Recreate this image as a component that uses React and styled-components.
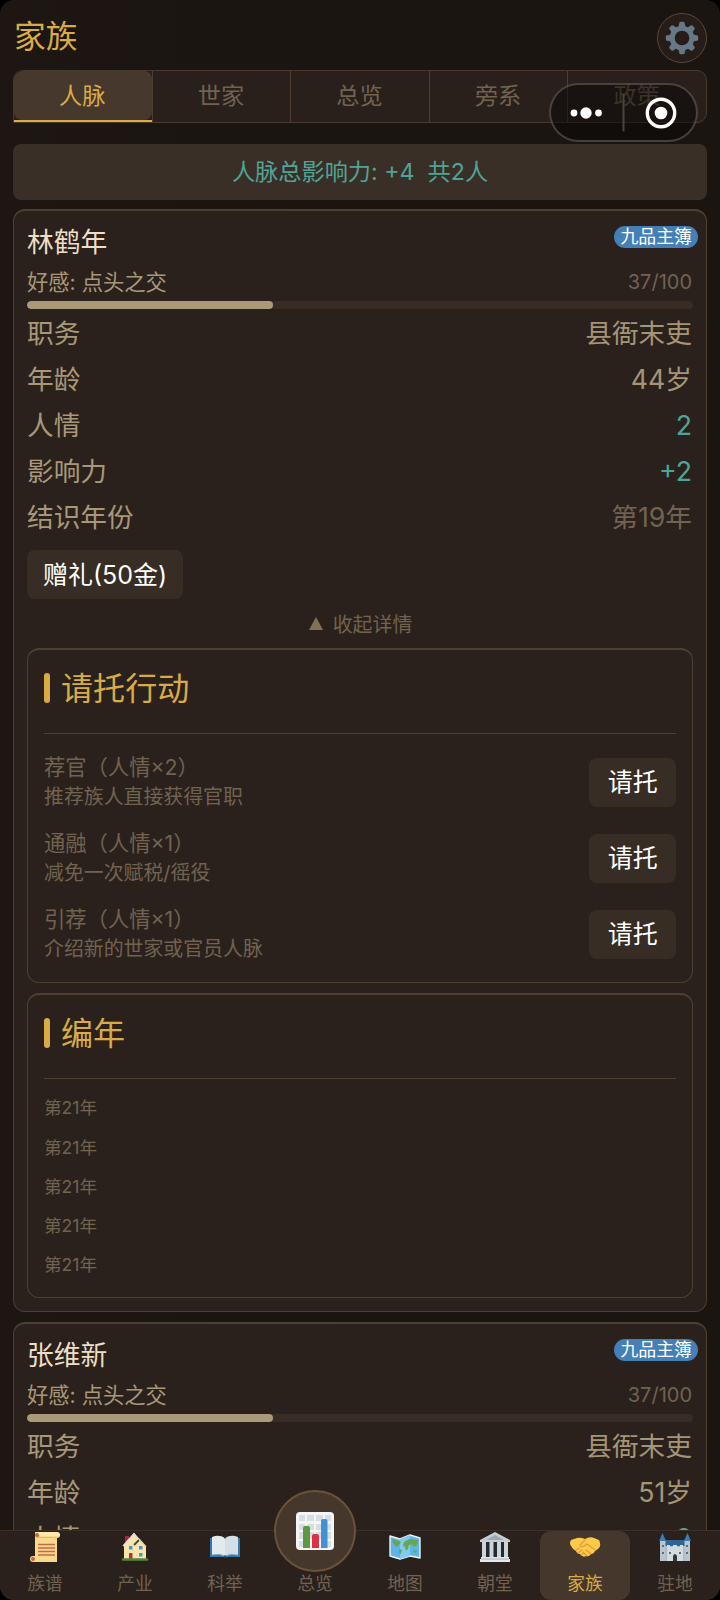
import React from "react";
import styled, { createGlobalStyle } from "styled-components";

const GlobalStyle = createGlobalStyle`
  * {
    box-sizing: border-box;
  }

  body {
    margin: 0;
    background: #000;
    color: #a89878;
    font-family: "Inter", "Noto Sans CJK SC", sans-serif;
    font-weight: 400;
  }

  button {
    padding: 0;
    border: 0;
    background: none;
    color: inherit;
    font: inherit;
  }
`;

const Screen = styled.div`
  position: relative;
  display: flex;
  flex-direction: column;
  width: 720px;
  height: 1600px;
  overflow: hidden;
  border-radius: 14px;
  background: linear-gradient(90deg, #1d1613, #1a1511 50%, #1b1511);
`;

const Header = styled.header`
  display: flex;
  flex: none;
  align-items: flex-start;
  justify-content: space-between;
  height: 70px;
  padding: 13px 13px 0 14px;
`;

const Title = styled.h1`
  margin: 0;
  color: #d9ab47;
  font-size: 31.7px;
  font-weight: inherit;
  line-height: 48px;
`;

const SettingsButton = styled.button`
  display: flex;
  align-items: center;
  justify-content: center;
  width: 50px;
  height: 50px;
  border: 1px solid #5c4733;
  border-radius: 50%;
  background: #261d18;
`;

const Tabs = styled.nav`
  display: flex;
  flex: none;
  height: 53px;
  margin: 0 13px;
  overflow: hidden;
  border: 1px solid #483a2e;
  border-radius: 10px 10px 10px 0;
  background: #29201c;
`;

const Tab = styled.button`
  display: flex;
  flex: 1;
  flex-direction: column;
  border-right: 1px solid #4e3f30;
  color: ${(props) => (props.$active ? "#d9ab47" : "#716350")};
  font-size: 23.2px;
  line-height: 49px;

  &:last-child {
    border-right: 0;
  }
`;

const TabLabel = styled.span`
  width: 100%;
  height: 49px;
  padding-right: 1px;
  border-radius: 8px;
  background: ${(props) => (props.$active ? "#46382c" : "none")};
  line-height: 50px;
`;

const TabLine = styled.span`
  width: 100%;
  height: 2px;
  background: #dcab45;
`;

const Scroller = styled.main`
  display: flex;
  flex: 1;
  flex-direction: column;
  min-height: 0;
  overflow: hidden;
  padding: 21px 13px 0;
`;

const Summary = styled.div`
  flex: none;
  height: 56px;
  margin-bottom: 9px;
  border-radius: 8px;
  background: #3a2f26;
  color: #4fa496;
  font-size: 23.2px;
  line-height: 56px;
  text-align: center;
  white-space: pre;
`;

const Card = styled.article`
  flex: none;
  margin-bottom: 10px;
  padding: 14px 13px 13px 13px;
  border: 1px solid #4e3f31;
  border-top-width: 2px;
  border-radius: 12px;
  background: #2a211d;
`;

const CardHead = styled.div`
  display: flex;
  align-items: flex-start;
  justify-content: space-between;
  height: 43px;
  margin-right: -5px;
`;

const Name = styled.h2`
  margin: 0;
  color: #ecdfc6;
  font-size: 26.8px;
  font-weight: inherit;
  line-height: 34px;
`;

const Badge = styled.span`
  height: 22px;
  margin-top: 1px;
  padding: 0 6px;
  border-radius: 11px;
  background: #447fb5;
  color: #fff;
  font-size: 17.9px;
  line-height: 22px;
`;

const Favor = styled.div`
  display: flex;
  justify-content: space-between;
  padding: 0 1px 0 0;
  font-size: 21.3px;
  line-height: 28px;
`;

const FavorCount = styled.span`
  color: #716350;
  font-size: 20px;
`;

const Track = styled.div`
  height: 8px;
  margin: 5px 0 1px;
  overflow: hidden;
  border-radius: 4px;
  background: #382c24;
`;

const Fill = styled.div`
  height: 100%;
  border-radius: 4px;
  background: #ab9a79;
`;

const Row = styled.div`
  display: flex;
  justify-content: space-between;
  padding: 0 1px 0 0;
  font-size: 26.7px;
  line-height: 46.1px;
`;

const tones = {
  normal: "#a59577",
  good: "#4fa496",
  dim: "#716350",
};

const Value = styled.span`
  color: ${(props) => tones[props.$tone]};
`;

const Button = styled.button`
  height: 49px;
  padding: 0 ${(props) => props.$pad}px;
  border-radius: 8px;
  background: #382d25;
  color: #fff;
  font-size: 25px;
  line-height: 48px;
`;

const GiftButton = styled(Button)`
  display: block;
  margin-top: 10px;
`;

const Toggle = styled.button`
  display: flex;
  align-items: center;
  justify-content: center;
  gap: 10px;
  width: 100%;
  height: 49px;
  padding: 0 0 1px 1px;
  color: #716350;
  font-size: 19.9px;
`;

const Triangle = styled.span`
  border-right: 7px solid transparent;
  border-bottom: 13px solid #817256;
  border-left: 7px solid transparent;
`;

const Panel = styled.section`
  margin-bottom: 10px;
  padding: 0 16px ${(props) => props.$bottom}px;
  border: 1px solid #4e3f31;
  border-top-width: 2px;
  border-radius: 12px;

  &:last-child {
    margin-bottom: 0;
  }
`;

const PanelTitle = styled.h3`
  display: flex;
  align-items: center;
  gap: 11px;
  height: 84px;
  margin: 0;
  padding-bottom: 11px;
  border-bottom: 1px solid #4e3f31;
  color: #d9ab47;
  font-size: 32.1px;
  font-weight: inherit;

  &::before {
    width: 6px;
    height: 30px;
    margin-top: 4px;
    border-radius: 3px;
    background: #d9ab47;
    content: "";
  }
`;

const Action = styled.div`
  display: flex;
  align-items: center;
  justify-content: space-between;
  height: 76px;
  color: #716350;
`;

const Actions = styled.div`
  padding-top: 10px;
`;

const ActionName = styled.div`
  font-size: 21.3px;
  line-height: 30px;
`;

const ActionText = styled.div`
  font-size: 19.9px;
  line-height: 30px;
`;

const Years = styled.ul`
  margin: 0;
  padding: 9px 0 0;
  list-style: none;
  color: #716350;
  font-size: 17.6px;
  line-height: 39.25px;
`;

const BottomNav = styled.nav`
  position: relative;
  display: flex;
  flex: none;
  height: 70px;
  border-top: 1px solid #3c3026;
  background: #2b211c;
`;

const NavItem = styled.button`
  display: flex;
  flex: 1;
  flex-direction: column;
  align-items: center;
  border-radius: 11px;
  background: ${(props) => (props.$active ? "#45372b" : "none")};
  color: ${(props) => (props.$active ? "#d9ab47" : "#716350")};
  font-size: 17.7px;
  line-height: 26px;
`;

const NavIcon = styled.span`
  display: flex;
  align-items: center;
  justify-content: center;
  height: 32px;
  margin-bottom: 8px;
`;

const HomeDisc = styled.span`
  display: flex;
  flex: none;
  align-items: center;
  justify-content: center;
  width: 82px;
  height: 82px;
  margin: -41px 0 -1px;
  border: 2px solid #6b5238;
  border-radius: 50%;
  background: #45372b;
`;

// Host app controls, floating above the page
const Capsule = styled.div`
  position: absolute;
  top: 83px;
  right: 22px;
  display: flex;
  align-items: center;
  width: 149px;
  height: 59px;
  border: 2px solid rgba(150, 140, 135, 0.4);
  border-radius: 30px;
  background: rgba(10, 5, 5, 0.52);
`;

const Gear = () => (
  <svg width="34" height="34" viewBox="-17 -17 34 34">
    <circle r="9.8" fill="none" stroke="#667785" strokeWidth="5" />
    {[0, 45, 90, 135, 180, 225, 270, 315].map((angle) => (
      <path
        key={angle}
        d="M-3.6 -10.5 L-2.7 -15 Q-2.5 -16.2 -1.4 -16.2 H1.4 Q2.5 -16.2 2.7 -15 L3.6 -10.5Z"
        fill="#667785"
        transform={`rotate(${angle})`}
      />
    ))}
  </svg>
);

const Scroll = () => (
  <svg width="32" height="32" viewBox="0 0 32 32">
    <path d="M6 1H28Q31 1 31 4T28 7V31H4Q1 31 1 28T4 25H6Z" fill="#f8d98c" />
    <path d="M6 1Q10 1 10 5H28Q31 6 31 4T28 1Z" fill="#ffe8a8" />
    <path d="M28 7Q26 7 22 6.5H10V4Q10 7 7 7" fill="none" stroke="#e2b86c" />
    <circle cx="8" cy="4" r="2" fill="#b86b3c" />
    <circle cx="4" cy="28" r="2" fill="#b86b3c" />
    <path d="M9 13.5H26M9 17H26M9 20.5H26M9 24H26" stroke="#c46a4d" strokeWidth="1.7" />
  </svg>
);

const House = () => (
  <svg width="28" height="30" viewBox="0 0 28 30">
    <path d="M4 4H8V12H4Z" fill="#a52938" />
    <path d="M3 13L13 1L25 14V28H3Z" fill="#fae6ac" />
    <path d="M2 14L13 1.5L18 8" fill="none" stroke="#d7dfe3" strokeWidth="1.3" />
    <path d="M18 8L13 13" stroke="#444446" strokeWidth="1.8" />
    <path d="M18 7L25 15" stroke="#e6d19b" strokeWidth="1.3" />
    <path d="M8 14H11.5V17.5H8ZM18 14H21.5V17.5H18ZM18 21H21.5V24.5H18Z" fill="#4b97ca" />
    <path d="M8 21H11.5V28H8Z" fill="#b4333f" />
    <path d="M2 27.5H26" stroke="#57853a" strokeWidth="2.4" strokeLinecap="round" />
  </svg>
);

const Book = () => (
  <svg width="32" height="24" viewBox="0 0 32 24">
    <path d="M1 3H31V22H18L16 23L14 22H1Z" fill="#3479a9" />
    <path d="M3 2Q10 -1 16 3V21Q10 18 3 20Z" fill="#e3eaee" />
    <path d="M29 2Q22 -1 16 3V21Q22 18 29 20Z" fill="#d3dee5" />
    <path d="M3 20Q10 18 16 21Q22 18 29 20" fill="none" stroke="#8fb0c3" />
    <path d="M16 1V3.5M16 20.5V23" stroke="#25313b" strokeWidth="1.4" />
  </svg>
);

const Chart = () => (
  <svg width="38" height="38" viewBox="0 0 38 38">
    <rect width="38" height="38" rx="4" fill="#f4f5f5" />
    <path
      d="M3 3H9V9H3ZM11 3H18V9H11ZM20 3H27V9H20ZM29 3H35V9H29ZM3 12H9V18H3ZM11 12H18V18H11ZM20 12H27V18H20ZM29 12H35V18H29ZM3 20H9V27H3ZM11 20H18V27H11ZM20 20H27V27H20ZM29 20H35V27H29ZM3 29H9V35H3ZM29 29H35V35H29Z"
      fill="#d5dfe3"
    />
    <path d="M7 36V16Q7 14 9 14H12Q14 14 14 16V36Z" fill="#5f9641" />
    <path d="M16 36V24Q16 22 18 22H21Q23 22 23 24V36Z" fill="#dc2f48" />
    <path d="M25 36V9Q25 7 27 7H29.5Q31.5 7 31.5 9V36Z" fill="#4092d3" />
  </svg>
);

const WorldMap = () => (
  <svg width="32" height="26" viewBox="0 0 32 26">
    <path
      d="M1 2L11 5L21 1L31 4V24L21 22L11 25L1 22Z"
      fill="#5eb4e9"
      stroke="#eef3f5"
      strokeWidth="1.4"
      strokeLinejoin="round"
    />
    <path d="M11 5L21 1V22L11 25Z" fill="#82c9f2" />
    <path
      d="M3 5L9 7L12 8L9 12L7 13L4 9ZM10 15L13 16L12 19L11 21L10 18ZM15 8L20 5L29 6L28 11L25 13L23 10L20 11L19 15L17 17L16 13L14 12ZM25 16L28 17L27 19L24 18Z"
      fill="#69a653"
    />
  </svg>
);

const Court = () => (
  <svg width="32" height="32" viewBox="0 0 32 32">
    <path d="M3 9H29V27H3Z" fill="#25282c" />
    <path d="M1 9L16 1L31 9V11H1Z" fill="#c3ced5" />
    <path d="M7 9L16 4L25 9Z" fill="#9daab5" />
    <path d="M3 11H7V27H3ZM10.5 11H14.5V27H10.5ZM18 11H22V27H18ZM25 11H29V27H25Z" fill="#cad4da" />
    <path d="M2 26H30V28H31V31H1V28H2Z" fill="#e4e9eb" />
    <path d="M2 28H30" stroke="#a4b1ba" />
  </svg>
);

const Handshake = () => (
  <svg width="32" height="22" viewBox="0 0 32 22">
    <path
      d="M2 4L8 2Q12 1 16 3Q21 0 25 2L30 4Q33 10 29 13L26 15Q25 18 22 18Q20 21 17 20Q14 22 11 18Q8 18 7 15Q4 14 2 10Q0 7 2 4Z"
      fill="#fcc948"
    />
    <path
      d="M16 4L11 9Q11 12 15 10L18 8L26 14M17 14L22 18M14 16L18 20M7 14L10 12M9 17L13 14M12 19L15 17"
      fill="none"
      stroke="#dd9a38"
      strokeLinecap="round"
      strokeLinejoin="round"
      strokeWidth="1.1"
    />
  </svg>
);

const Castle = () => (
  <svg width="32" height="30" viewBox="0 0 32 30">
    <path d="M2 10H6V13H26V10H30V29H2Z" fill="#aebbc5" />
    <path d="M6 8H26V14H6Z" fill="#2f6595" />
    <path d="M0 9L3.5 1L7 9ZM25 9L28.5 1L32 9Z" fill="#3c7db5" />
    <path d="M1 9H6.5V29H1ZM25.5 9H31V29H25.5Z" fill="#b9c5cd" />
    <path d="M8 13H11V15H14V13H18V15H21V13H24V29H8Z" fill="#d3dbdf" />
    <path d="M14 29V24Q16 20 18 24V29Z" fill="#34383d" />
    <path d="M3 13H5V15H3ZM27 13H29V15H27ZM10 20H12V22H10ZM20 20H22V22H20ZM3 20H5V22H3ZM27 20H29V22H27Z" fill="#5c6f7b" />
  </svg>
);

const tabs = ["人脉", "世家", "总览", "旁系", "政策"];

const requests = [
  { name: "荐官（人情×2）", text: "推荐族人直接获得官职" },
  { name: "通融（人情×1）", text: "减免一次赋税/徭役" },
  { name: "引荐（人情×1）", text: "介绍新的世家或官员人脉" },
];

const years = ["第21年", "第21年", "第21年", "第21年", "第21年"];

const people = [
  { name: "林鹤年", age: "44岁", open: true },
  { name: "张维新", age: "51岁", open: false },
];

const navItems = [
  { label: "族谱", Icon: Scroll },
  { label: "产业", Icon: House },
  { label: "科举", Icon: Book },
  { label: "总览", Icon: Chart, home: true },
  { label: "地图", Icon: WorldMap },
  { label: "朝堂", Icon: Court },
  { label: "家族", Icon: Handshake, active: true },
  { label: "驻地", Icon: Castle },
];

const InfoRow = ({ label, value, tone = "normal" }) => (
  <Row>
    <span>{label}</span>
    <Value $tone={tone}>{value}</Value>
  </Row>
);

const Details = () => (
  <>
    <Panel $bottom={10}>
      <PanelTitle>请托行动</PanelTitle>
      <Actions>
        {requests.map((request) => (
          <Action key={request.name}>
            <div>
              <ActionName>{request.name}</ActionName>
              <ActionText>{request.text}</ActionText>
            </div>
            <Button $pad={18.25}>请托</Button>
          </Action>
        ))}
      </Actions>
    </Panel>
    <Panel $bottom={12}>
      <PanelTitle>编年</PanelTitle>
      <Years>
        {years.map((year, i) => (
          <li key={i}>{year}</li>
        ))}
      </Years>
    </Panel>
  </>
);

const Person = ({ name, age, open }) => (
  <Card>
    <CardHead>
      <Name>{name}</Name>
      <Badge>九品主簿</Badge>
    </CardHead>
    <Favor>
      <span>好感: 点头之交</span>
      <FavorCount>37/100</FavorCount>
    </Favor>
    <Track>
      <Fill style={{ width: "37%" }} />
    </Track>
    <InfoRow label="职务" value="县衙末吏" />
    <InfoRow label="年龄" value={age} />
    <InfoRow label="人情" value="2" tone="good" />
    <InfoRow label="影响力" value="+2" tone="good" />
    <InfoRow label="结识年份" value="第19年" tone="dim" />
    <GiftButton $pad={16}>赠礼(50金)</GiftButton>
    <Toggle>
      <Triangle />
      {open ? "收起详情" : "展开详情"}
    </Toggle>
    {open && <Details />}
  </Card>
);

const App = () => (
  <>
    <GlobalStyle />
    <Screen>
      <Header>
        <Title>家族</Title>
        <SettingsButton aria-label="设置">
          <Gear />
        </SettingsButton>
      </Header>
      <Tabs>
        {tabs.map((tab, i) => (
          <Tab key={tab} $active={i === 0}>
            <TabLabel $active={i === 0}>{tab}</TabLabel>
            {i === 0 && <TabLine />}
          </Tab>
        ))}
      </Tabs>
      <Scroller>
        <Summary>{"人脉总影响力: +4  共2人"}</Summary>
        {people.map((person) => (
          <Person key={person.name} {...person} />
        ))}
      </Scroller>
      <BottomNav>
        {navItems.map(({ label, Icon, home, active }) => (
          <NavItem key={label} $active={active}>
            {home ? (
              <HomeDisc>
                <Icon />
              </HomeDisc>
            ) : (
              <NavIcon>
                <Icon />
              </NavIcon>
            )}
            {label}
          </NavItem>
        ))}
      </BottomNav>
      <Capsule>
        <svg width="145" height="55" viewBox="0 0 145 55">
          <g fill="#fff">
            <circle cx="23" cy="28" r="3.4" />
            <circle cx="35" cy="28" r="5.7" />
            <circle cx="47.5" cy="28" r="3.4" />
            <circle cx="110" cy="28" r="6.3" />
          </g>
          <circle cx="110" cy="28" r="13.7" fill="none" stroke="#fff" strokeWidth="3.4" />
          <path d="M72.5 9.5V46.5" stroke="#4b4340" strokeWidth="2" />
        </svg>
      </Capsule>
    </Screen>
  </>
);

export default App;
